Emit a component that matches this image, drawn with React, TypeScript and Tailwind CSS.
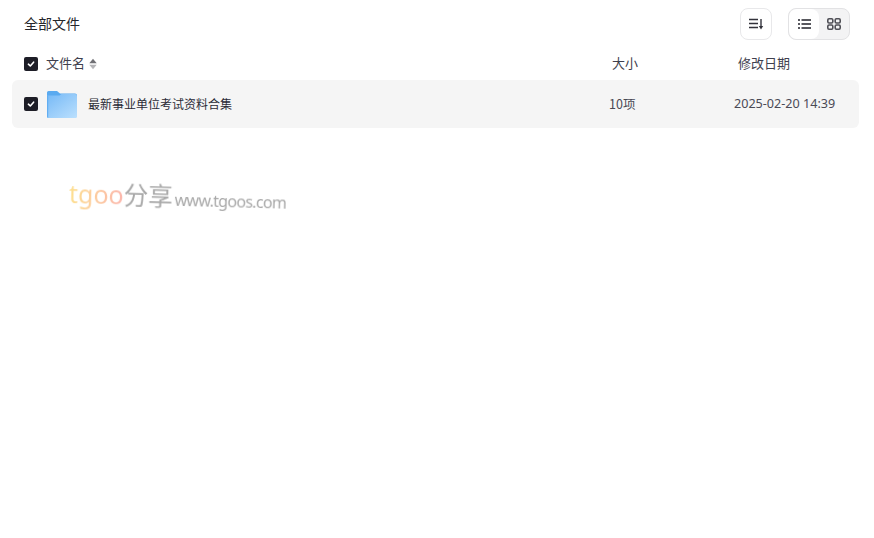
const cjk = { fontFamily: '"Microsoft YaHei","Noto Sans CJK SC","Noto Sans",sans-serif' };

function Check() {
  return (
    <span className="flex h-[14px] w-[14px] shrink-0 items-center justify-center rounded-[2px] bg-[#1d1d26]">
      <svg width="10" height="10" viewBox="0 0 10 10" fill="none">
        <path d="M2.4 5.2 4.3 7 7.6 3.2" stroke="#fff" strokeWidth="1.6" strokeLinecap="round" strokeLinejoin="round" />
      </svg>
    </span>
  );
}

function Folder() {
  return (
    <svg width="30" height="27" viewBox="0 0 30 27" className="block shrink-0">
      <defs>
        <linearGradient id="f" x1="0.1" y1="0.1" x2="0.9" y2="1">
          <stop offset="0" stopColor="#7dbdf7" />
          <stop offset="1" stopColor="#b8defd" />
        </linearGradient>
      </defs>
      <path d="M0 1.5A1.5 1.5 0 0 1 1.5 0H10l3 2.5h15A2 2 0 0 1 30 4.5V9H0z" fill="#5aaaf0" />
      <path d="M0 4.5h12.5L14.5 3H28a2 2 0 0 1 2 2v20.5a1.5 1.5 0 0 1-1.5 1.5H1.5A1.5 1.5 0 0 1 0 25.5z" fill="url(#f)" />
      <path d="M0 4.5h1.2V27A1.5 1.5 0 0 1 0 25.5z" fill="#62aef2" />
      <rect x="22.5" y="8" width="3" height="1.5" fill="#9accf5" />
    </svg>
  );
}

export default function App() {
  return (
    <div className="relative h-[538px] w-[874px] overflow-hidden bg-white text-[#25262b]" style={cjk}>
      <div className="flex h-[47px] items-center pl-6 pr-6">
        <span className="-mt-px flex-1 text-sm leading-5 text-[#25262b]">全部文件</span>
        <button className="flex h-8 w-8 items-center justify-center rounded-lg border border-[#e8e8ea] bg-white">
          <svg width="15" height="12" viewBox="0 0 15 12" fill="none" stroke="#33333b" strokeWidth="1.3">
            <path d="M0 1.5h9M0 5.5h9M0 9.5h9" />
            <path d="M12 1v8" strokeWidth="1.4" />
            <path d="M9.8 8h4.4L12 11.5z" fill="#33333b" stroke="none" />
          </svg>
        </button>
        <div className="ml-4 flex h-8 w-[62px] overflow-hidden rounded-lg border border-[#e2e2e4] bg-[#f3f3f4]">
          <div className="flex w-[30px] items-center justify-center rounded-lg bg-white">
            <svg width="13" height="10" viewBox="0 0 13 10" fill="none" stroke="#22222a" strokeWidth="1.3">
              <path d="M0 1h2M0 5h2M0 9h2M3.5 1H13M3.5 5H13M3.5 9H13" />
            </svg>
          </div>
          <div className="flex flex-1 items-center justify-center">
            <svg width="14" height="12" viewBox="0 0 14 12" fill="none" stroke="#505057" strokeWidth="1.6">
              <rect x="0.8" y="0.8" width="5" height="4.2" rx="1.2" />
              <rect x="8.2" y="0.8" width="5" height="4.2" rx="1.2" />
              <rect x="0.8" y="7" width="5" height="4.2" rx="1.2" />
              <rect x="8.2" y="7" width="5" height="4.2" rx="1.2" />
            </svg>
          </div>
        </div>
      </div>

      <div className="flex h-[33px] items-center pl-6 text-[13px] text-[#3f3f4e]">
        <Check />
        <span className="-mt-px ml-2 leading-5">文件名</span>
        <svg width="8" height="12" viewBox="0 0 8 12" className="ml-1">
          <path d="M4 .8 7.7 5.3H.3z" fill="#6f6f74" />
          <path d="M4 11.2 .3 6.7h7.4z" fill="#b4b4b7" />
        </svg>
        <span className="-mt-px ml-[515px] leading-5">大小</span>
        <span className="-mt-px ml-[100px] leading-5">修改日期</span>
      </div>

      <div className="mx-3 flex h-[47.5px] w-[847px] items-center rounded-md bg-[#f5f5f5] pl-3">
        <Check />
        <span className="ml-[9px] mt-px"><Folder /></span>
        <span className="ml-[11px] mt-px w-[521px] text-xs text-[#2b2b35]">最新事业单位考试资料合集</span>
        <span className="mt-px w-[125px] pl-[-1px] text-[12.5px] text-[#4a4a55]">10项</span>
        <span className="mt-px text-[12.6px] text-[#4a4a55]" style={{ fontFamily: '"Noto Sans","Noto Sans CJK SC",sans-serif' }}>2025-02-20 14:39</span>
      </div>

      <div className="absolute left-[69px] top-[177px] flex origin-left rotate-[1.5deg] items-baseline whitespace-nowrap blur-[0.4px]" style={{ fontFamily: '"Noto Sans","Noto Sans CJK SC",sans-serif' }}>
        <span className="bg-gradient-to-r from-[#fde08f] to-[#fbb5ac] bg-clip-text text-[25px] leading-8 text-transparent">tgoo</span>
        <span className="text-[24.5px] leading-8 text-[#a9a9a9]">分享</span>
        <span className="ml-[2px] text-[16px] leading-8 tracking-[-0.7px] text-[#a9a9a9]">www.tgoos.com</span>
      </div>
    </div>
  );
}
